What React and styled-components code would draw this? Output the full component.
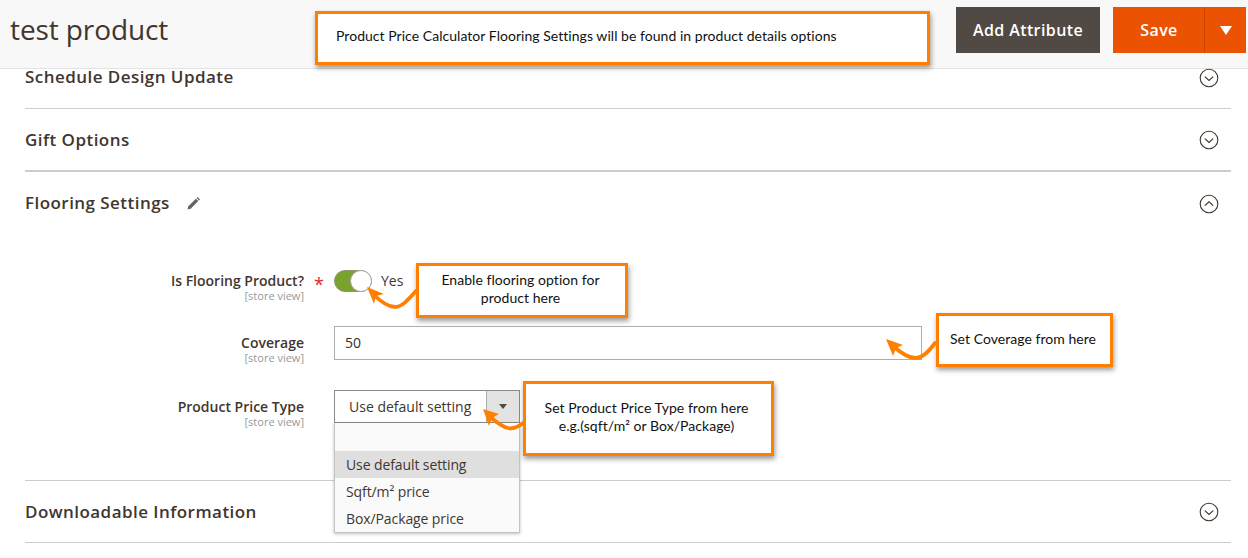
import styled, { createGlobalStyle } from "styled-components";

const Global = createGlobalStyle`
  html, body { margin: 0; padding: 0; background: #fff; }
  body { font-family: "Open Sans", "Liberation Sans", sans-serif; color: #41362f; }
  * { box-sizing: border-box; }
`;

const Page = styled.div`
  position: relative;
  width: 1248px;
  height: 558px;
  overflow: hidden;
`;
const Header = styled.header`
  position: relative;
  z-index: 2;
  display: flex;
  align-items: flex-start;
  height: 69px;
  padding: 7px 2px 0 10px;
  background: #f8f8f8;
  border-bottom: 1px solid #e3e3e3;
`;
const Title = styled.h1`
  flex: 1;
  margin: 2px 0 0;
  font-size: 28px;
  line-height: 40px;
  font-weight: 400;
  letter-spacing: -0.1px;
  color: #41362f;
`;
const Button = styled.button`
  height: 46px;
  padding: 0;
  border: 0;
  color: #fff;
  font-family: inherit;
  font-size: 16px;
  font-weight: 600;
  letter-spacing: 0.4px;
`;
const AddButton = styled(Button)`
  width: 144px;
  margin-right: 13px;
  background: #514943;
`;
const SaveButton = styled(Button)`
  width: 92px;
  background: #eb5202;
`;
const SaveToggle = styled(Button)`
  display: flex;
  align-items: center;
  justify-content: center;
  width: 42px;
  margin-left: -1px;
  background: #eb5202;
  border-left: 1px solid #c94400;
`;
const Caret = styled.span`
  width: 0;
  height: 0;
  border-style: solid;
  border-width: ${(p) => p.$h}px ${(p) => p.$w}px 0;
  border-color: ${(p) => p.$color} transparent transparent;
`;
const Main = styled.main`
  margin: -22px 17px 0 25px;
`;
const Section = styled.section`
  border-bottom: ${(p) => p.$thick || 1}px solid #cccccc;
`;
const SectionHead = styled.div`
  display: flex;
  align-items: center;
  height: ${(p) => p.$height}px;
`;
const SectionTitle = styled.h2`
  margin: 0 0 ${(p) => p.$lift || 0}px;
  font-size: 17px;
  font-weight: 600;
  letter-spacing: 0.45px;
  color: #41362f;
`;
const Pencil = styled.svg`
  width: 15px;
  height: 15px;
  margin-left: 16px;
`;
const Toggle = styled.svg`
  width: 20px;
  height: 20px;
  margin-left: auto;
  margin-right: 12.5px;
`;
const Form = styled.div`
  display: flex;
  flex-direction: column;
  padding-bottom: 57px;
`;
const Row = styled.div`
  display: flex;
  align-items: flex-start;
  height: ${(p) => p.$height}px;
`;
const SwitchRow = styled.div`
  display: flex;
  align-items: center;
  height: 22px;
  margin-top: 35px;
`;
const LabelCell = styled.div`
  width: 279px;
  text-align: right;
  padding-top: ${(p) => p.$top || 0}px;
`;
const Label = styled.div`
  font-size: 14px;
  line-height: 19px;
  font-weight: 600;
  color: #41362f;
`;
const Scope = styled.div`
  font-size: 11px;
  line-height: 12px;
  color: #999;
`;
const Required = styled.span`
  width: 30px;
  padding: 38px 0 0 10px;
  font-size: 18px;
  line-height: 22px;
  color: #e22626;
`;
const Switch = styled.span`
  position: relative;
  width: 38px;
  height: 22px;
  border-radius: 11px;
  background: #79a22e;
  border: 1px solid #8a9a6a;
`;
const Knob = styled.span`
  position: absolute;
  top: -1px;
  right: -1px;
  width: 22px;
  height: 22px;
  border-radius: 50%;
  background: #fff;
  border: 1px solid #aaa6a0;
`;
const SwitchText = styled.span`
  margin-left: 9px;
  font-size: 14px;
  line-height: 22px;
  color: #41362f;
`;
const Input = styled.div`
  width: 588px;
  height: 34px;
  margin-left: 30px;
  padding-left: 10px;
  border: 1px solid #adadad;
  font-size: 14px;
  line-height: 32px;
  color: #303030;
`;
const SelectWrap = styled.div`
  position: relative;
  margin-left: 30px;
  width: 186px;
`;
const Select = styled.div`
  display: flex;
  height: 33px;
  border: 1px solid #8a8a8a;
`;
const SelectValue = styled.span`
  flex: 1;
  padding-left: 14px;
  font-size: 14px;
  line-height: 31px;
  color: #41362f;
`;
const SelectButton = styled.span`
  display: flex;
  align-items: center;
  justify-content: center;
  width: 33px;
  background: #e3e3e3;
  border-left: 1px solid #adadad;
`;
const Menu = styled.ul`
  position: absolute;
  z-index: 1;
  top: 33px;
  left: 0;
  width: 186px;
  margin: 0;
  padding: 28px 0 0;
  list-style: none;
  background: #fafafa;
  border: 1px solid #c4c4c4;
  border-top: 0;
  box-shadow: 0 1px 3px rgba(0, 0, 0, 0.25);
`;
const MenuItem = styled.li`
  height: 27px;
  padding-left: 11px;
  font-size: 14px;
  line-height: 27px;
  letter-spacing: -0.1px;
  color: #41362f;
  background: ${(p) => (p.$active ? "#dfdfdf" : "transparent")};
`;
const Callout = styled.div`
  position: absolute;
  z-index: 3;
  left: ${(p) => p.$x}px;
  top: ${(p) => p.$y}px;
  width: ${(p) => p.$w}px;
  height: ${(p) => p.$h}px;
  padding: 0 ${(p) => p.$pr || 0}px ${(p) => p.$pb || 0}px ${(p) => p.$pl || 0}px;
  display: flex;
  align-items: center;
  justify-content: ${(p) => (p.$left ? "flex-start" : "center")};
  background: #fff;
  border: 3px solid #ff8000;
  box-shadow: 1px 3px 5px rgba(0, 0, 0, 0.4);
  font-family: Lato, "Open Sans", sans-serif;
  font-size: 14px;
  line-height: 18px;
  letter-spacing: 0.04px;
  text-align: center;
  color: #111;
`;
const Arrow = styled.svg`
  position: absolute;
  z-index: 3;
  left: ${(p) => p.$x}px;
  top: ${(p) => p.$y}px;
  overflow: visible;
`;

function Chevron({ up }) {
  return (
    <Toggle viewBox="0 0 20 20">
      <circle cx="10" cy="10" r="8.8" fill="none" stroke="#41362f" strokeWidth="1.1" />
      <path
        d={up ? "M5.8 11.6 10 7.8l4.2 3.8" : "M5.8 8.6 10 12.4l4.2-3.8"}
        fill="none"
        stroke="#41362f"
        strokeWidth="1.2"
      />
    </Toggle>
  );
}

function CurveArrow({ x, y, body, head }) {
  return (
    <Arrow $x={x} $y={y} width="52" height="24" viewBox="0 0 52 24">
      <path d={body} fill="none" stroke="#ff8000" strokeWidth="3.8" strokeLinecap="round" />
      <path d={head} fill="#ff8000" />
    </Arrow>
  );
}

export default function App() {
  return (
    <Page>
      <Global />
      <Header>
        <Title>test product</Title>
        <AddButton>Add Attribute</AddButton>
        <SaveButton>Save</SaveButton>
        <SaveToggle>
          <Caret $w={6} $h={9} $color="#fff" />
        </SaveToggle>
      </Header>
      <Main>
        <Section>
          <SectionHead $height={61}>
            <SectionTitle $lift={2}>Schedule Design Update</SectionTitle>
            <Chevron />
          </SectionHead>
        </Section>
        <Section $thick={2}>
          <SectionHead $height={61}>
            <SectionTitle>Gift Options</SectionTitle>
            <Chevron />
          </SectionHead>
        </Section>
        <Section>
          <SectionHead $height={63}>
            <SectionTitle $lift={2}>Flooring Settings</SectionTitle>
            <Pencil viewBox="0 0 15 15">
              <path d="M1.5 13.5l.8-3.2 7.6-7.6 2.4 2.4-7.6 7.6z" fill="#6b635d" />
              <path d="M10.6 2l1-1 2.4 2.4-1 1z" fill="#6b635d" />
            </Pencil>
            <Chevron up />
          </SectionHead>
          <Form>
            <Row $height={91}>
              <LabelCell $top={36}>
                <Label>Is Flooring Product?</Label>
                <Scope>[store view]</Scope>
              </LabelCell>
              <Required>*</Required>
              <SwitchRow>
                <Switch>
                  <Knob />
                </Switch>
                <SwitchText>Yes</SwitchText>
              </SwitchRow>
            </Row>
            <Row $height={64}>
              <LabelCell $top={7}>
                <Label>Coverage</Label>
                <Scope>[store view]</Scope>
              </LabelCell>
              <Input>50</Input>
            </Row>
            <Row $height={33}>
              <LabelCell $top={7}>
                <Label>Product Price Type</Label>
                <Scope>[store view]</Scope>
              </LabelCell>
              <SelectWrap>
                <Select>
                  <SelectValue>Use default setting</SelectValue>
                  <SelectButton>
                    <Caret $w={4} $h={5} $color="#514943" />
                  </SelectButton>
                </Select>
                <Menu>
                  <MenuItem $active>Use default setting</MenuItem>
                  <MenuItem>Sqft/m² price</MenuItem>
                  <MenuItem>Box/Package price</MenuItem>
                </Menu>
              </SelectWrap>
            </Row>
          </Form>
        </Section>
        <Section>
          <SectionHead $height={61}>
            <SectionTitle>Downloadable Information</SectionTitle>
            <Chevron />
          </SectionHead>
        </Section>
      </Main>

      <Callout $x={315} $y={11} $w={615} $h={54} $left $pl={18} $pb={4}>
        Product Price Calculator Flooring Settings will be found in product details options
      </Callout>
      <Callout $x={416} $y={263} $w={212} $h={55} $pr={3} $pb={4}>
        Enable flooring option for
        <br />
        product here
      </Callout>
      <CurveArrow
        x={366}
        y={286}
        body="M50 5C42 14 36 21 29 21 22 21 15 16 7 8"
        head="M1 1 18 8 10 10 8 18z"
      />
      <Callout $x={936} $y={313} $w={177} $h={54} $left $pl={11} $pb={2}>
        Set Coverage from here
      </Callout>
      <CurveArrow
        x={885}
        y={338}
        body="M50 5C44 13 38 20 30 20 23 20 16 15 8 8"
        head="M1 1 18 7 11 10 8 18z"
      />
      <Callout $x={523} $y={381} $w={251} $h={75} $pr={4} $pb={4}>
        Set Product Price Type from here
        <br />
        e.g.(sqft/m² or Box/Package)
      </Callout>
      <CurveArrow
        x={482}
        y={408}
        body="M41 15C36 19 30 21 26 20 20 19 14 14 7 8"
        head="M1 1 17 6 10 10 7 18z"
      />
    </Page>
  );
}
